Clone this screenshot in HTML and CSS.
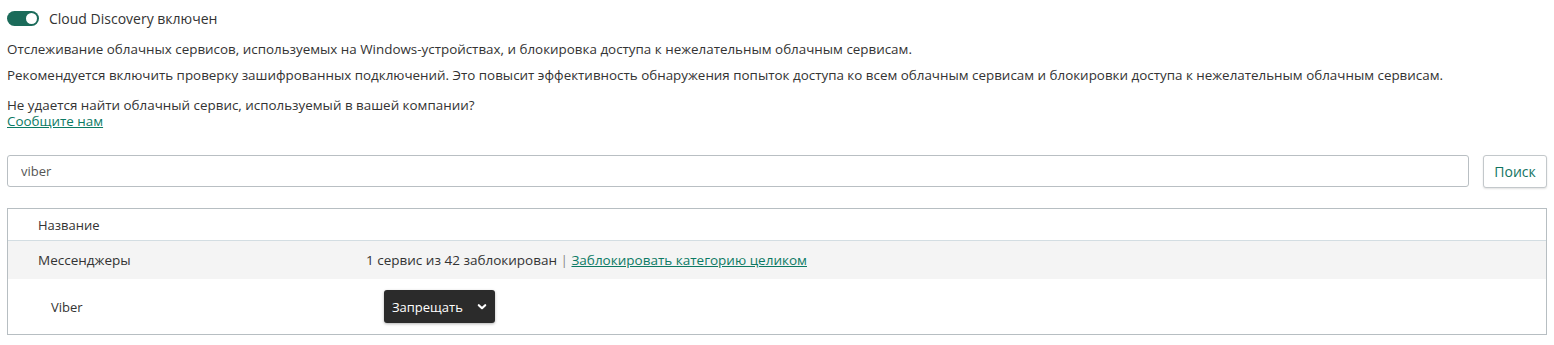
FILE: index.html
```html
<!DOCTYPE html>
<html>
<head>
  <meta charset="UTF-8">
  <title>Cloud Discovery</title>
  <link rel="stylesheet" href="styles.css">
</head>
<body>
  <div class="page">
    <label class="switch-row">
      <span class="switch on"><span class="knob"></span></span>
      <span class="switch-label">Cloud Discovery включен</span>
    </label>

    <p class="note first">Отслеживание облачных сервисов, используемых на Windows-устройствах, и блокировка доступа к нежелательным облачным сервисам.</p>
    <p class="note">Рекомендуется включить проверку зашифрованных подключений. Это повысит эффективность обнаружения попыток доступа ко всем облачным сервисам и блокировки доступа к нежелательным облачным сервисам.</p>

    <div class="missing">
      <div>Не удается найти облачный сервис, используемый в вашей компании?</div>
      <a href="#" class="link">Сообщите нам</a>
    </div>

    <div class="search">
      <input type="text" class="search-input" value="viber">
      <button class="search-btn">Поиск</button>
    </div>

    <div class="table">
      <div class="row head">
        <div class="cell name">Название</div>
      </div>
      <div class="row category">
        <div class="cell name">Мессенджеры</div>
        <div class="cell status">1 сервис из 42 заблокирован <span class="sep">|</span> <a href="#" class="link">Заблокировать категорию целиком</a></div>
      </div>
      <div class="row service">
        <div class="cell name">Viber</div>
        <div class="cell status">
          <button class="select">
            <span>Запрещать</span>
            <svg width="10" height="8" viewBox="0 0 10 8"><path d="M1.8 2.2 L5 5.2 L8.2 2.2" fill="none" stroke="#fff" stroke-width="2.2" stroke-linecap="round" stroke-linejoin="round"/></svg>
          </button>
        </div>
      </div>
    </div>
  </div>
</body>
</html>
```

FILE: styles.css
```css
* {
  margin: 0;
  padding: 0;
  box-sizing: border-box;
}

body {
  font-family: 'Open Sans', 'Noto Sans', Arial, sans-serif;
  font-size: 13px;
  color: #333;
  background: #fff;
}

.page {
  padding: 10px 7px 0 7px;
}

.switch-row {
  display: flex;
  align-items: center;
  gap: 10px;
  height: 17px;
}

.switch {
  width: 32px;
  height: 15px;
  border-radius: 8px;
  background: #1b6b5a;
  display: flex;
  align-items: center;
  justify-content: flex-end;
  padding: 0 2px;
}

.knob {
  width: 11px;
  height: 11px;
  border-radius: 50%;
  background: #fff;
}

.switch-label {
  font-size: 14px;
  color: #333;
}

.note {
  font-size: 13.4px;
  line-height: 16px;
  margin-top: 10px;
}

.note.first {
  margin-top: 14px;
}

.missing {
  font-size: 13.4px;
  margin-top: 14px;
  line-height: 16px;
}

.link {
  color: #0c7a64;
  text-decoration: underline;
}

.search {
  display: flex;
  gap: 14px;
  margin-top: 26px;
}

.search-input {
  flex: 1;
  height: 32px;
  border: 1px solid #b9bfc3;
  border-radius: 3px;
  padding: 0 13px;
  font-family: inherit;
  font-size: 13px;
  color: #555;
  outline: none;
}

.search-btn {
  width: 64px;
  height: 33px;
  border: 1px solid #c3c8cb;
  border-radius: 3px;
  background: #fff;
  color: #12735f;
  font-family: inherit;
  font-size: 14px;
  box-shadow: 0 1px 2px rgba(0,0,0,0.12);
}

.table {
  margin-top: 20px;
  border: 1px solid #b7bec2;
}

.row {
  display: flex;
  align-items: center;
}

.row.head {
  height: 32px;
  border-bottom: 1px solid #d3dde2;
}

.row.category {
  height: 38px;
  background: #f4f4f4;
  font-size: 13.5px;
}

.row.service {
  height: 55px;
}

.cell.name {
  width: 358px;
  padding-left: 30px;
}

.row.service .cell.name {
  padding-left: 43px;
}

.sep {
  color: #888;
}

.select {
  margin-left: 18px;
  height: 33px;
  width: 111px;
  background: #2b2b2b;
  color: #fff;
  border: none;
  border-radius: 3px;
  display: flex;
  align-items: center;
  justify-content: space-between;
  padding: 0 8px 0 8px;
  font-family: inherit;
  font-size: 13px;
  box-shadow: 0 1px 3px rgba(0,0,0,0.3);
}
```
